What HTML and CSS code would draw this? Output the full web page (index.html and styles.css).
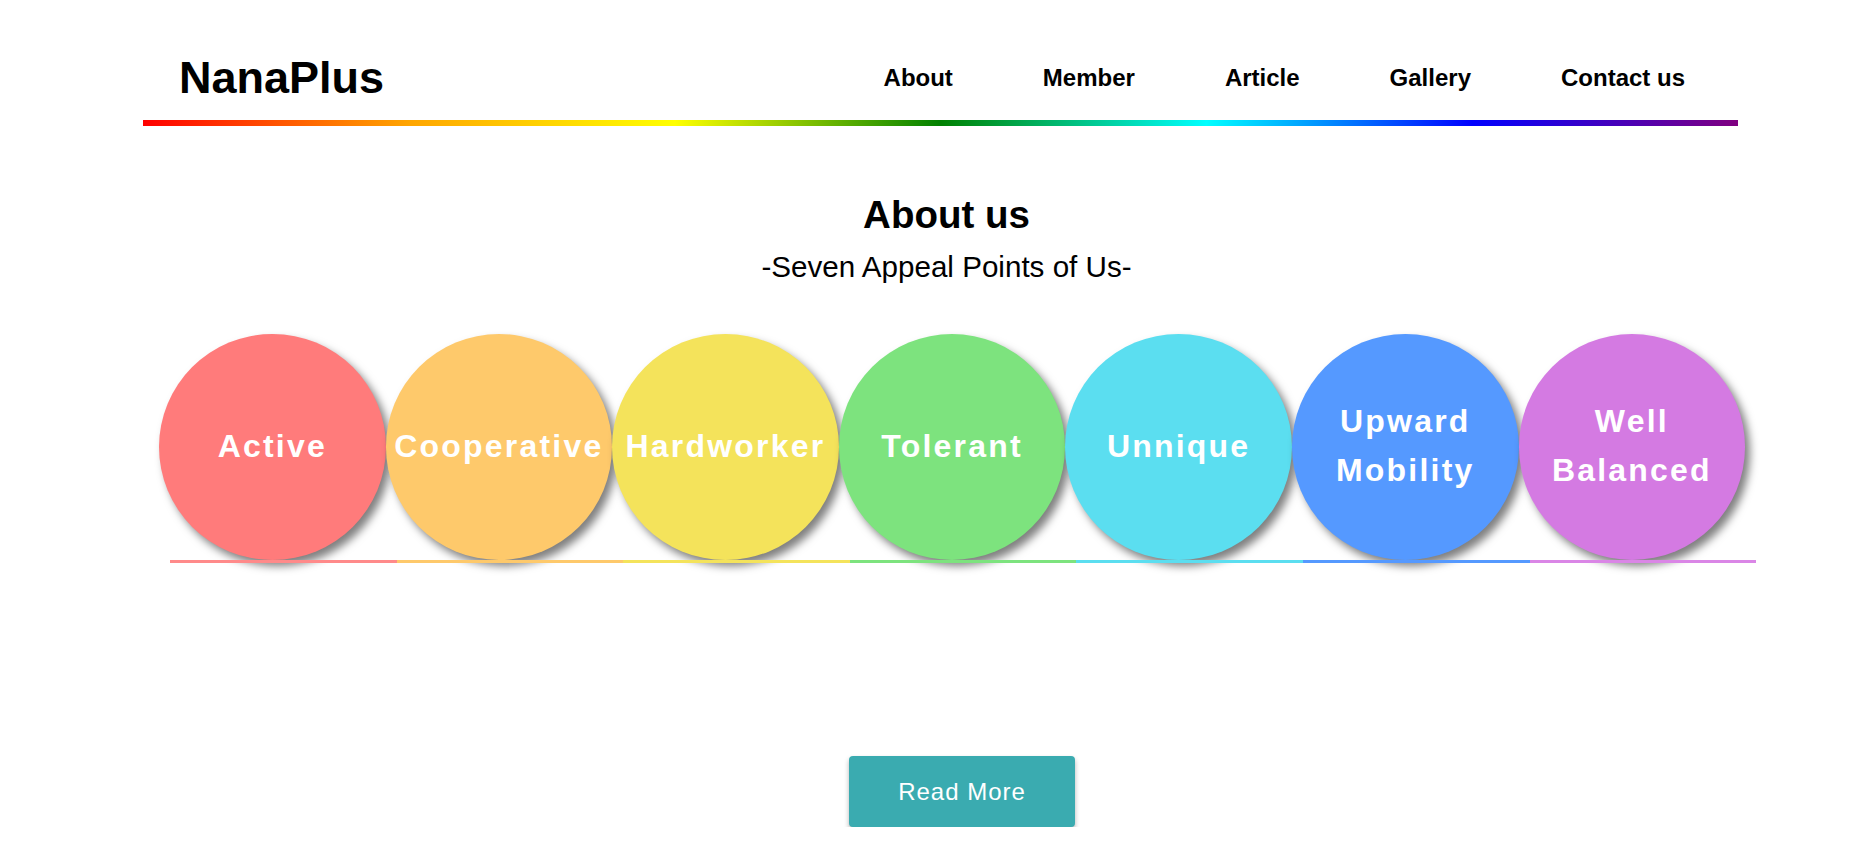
FILE: index.html
```html
<!DOCTYPE html>
<html lang="en">
<head>
<meta charset="utf-8">
<title>NanaPlus</title>
<link rel="stylesheet" href="styles.css">
</head>
<body>
<header class="site-header">
  <div class="header-row">
    <div class="logo">NanaPlus</div>
    <nav class="nav">
      <a class="nav-link" href="#">About</a>
      <a class="nav-link" href="#">Member</a>
      <a class="nav-link" href="#">Article</a>
      <a class="nav-link" href="#">Gallery</a>
      <a class="nav-link" href="#">Contact us</a>
    </nav>
  </div>
  <div class="rainbow-line"></div>
</header>

<main class="about">
  <h1 class="about-title">About us</h1>
  <p class="about-sub">-Seven Appeal Points of Us-</p>

  <div class="circles">
    <div class="circle c-red"><span>Active</span></div>
    <div class="circle c-orange"><span>Cooperative</span></div>
    <div class="circle c-yellow"><span>Hardworker</span></div>
    <div class="circle c-green"><span>Tolerant</span></div>
    <div class="circle c-cyan"><span>Unnique</span></div>
    <div class="circle c-blue"><span>Upward<br>Mobility</span></div>
    <div class="circle c-purple"><span>Well<br>Balanced</span></div>
  </div>
  <div class="lines">
    <div class="seg c-red"></div>
    <div class="seg c-orange"></div>
    <div class="seg c-yellow"></div>
    <div class="seg c-green"></div>
    <div class="seg c-cyan"></div>
    <div class="seg c-blue"></div>
    <div class="seg c-purple"></div>
  </div>

  <div class="btn-row">
    <a class="btn" href="#">Read More</a>
  </div>
</main>
</body>
</html>
```

FILE: styles.css
```css
* { box-sizing: border-box; }

html, body {
  margin: 0;
  padding: 0;
  background: #ffffff;
}

body {
  font-family: "Liberation Sans", Arial, sans-serif;
  color: #000;
}

.site-header {
  margin-left: 143px;
  width: 1595px;
  padding-top: 52px;
}

.header-row {
  display: flex;
  justify-content: space-between;
  align-items: flex-start;
  padding-left: 36px;
  padding-right: 53px;
  padding-bottom: 16px;
}

.logo {
  font-size: 45px;
  font-weight: bold;
  line-height: 52px;
}

.nav {
  display: flex;
  gap: 90px;
}

.nav-link {
  font-size: 24px;
  font-weight: bold;
  line-height: 52px;
  color: #000;
  text-decoration: none;
}

.rainbow-line {
  height: 6px;
  background: linear-gradient(to right, red, orange, yellow, green, cyan, blue, purple);
}

.about {
  margin-left: 143px;
  width: 1607px;
  padding-top: 66px;
}

.about-title {
  margin: 0;
  text-align: center;
  font-size: 38.5px;
  line-height: 46px;
  font-weight: bold;
}

.about-sub {
  margin: 11px 0 0;
  text-align: center;
  font-size: 29.6px;
  line-height: 35px;
}

.circles {
  display: flex;
  margin-top: 50px;
  margin-left: 16px;
}

.circle {
  width: 226.6px;
  height: 226px;
  flex: none;
  border-radius: 50%;
  display: flex;
  align-items: center;
  justify-content: center;
  padding-bottom: 2px;
  text-align: center;
  color: #fff;
  font-size: 32px;
  font-weight: bold;
  line-height: 49px;
  letter-spacing: 2.2px;
  box-shadow: 5px 6px 8px rgba(0, 0, 0, 0.5);
  white-space: nowrap;
}

.lines {
  display: flex;
  margin-left: 27px;
}

.seg {
  width: 226.6px;
  height: 3px;
  flex: none;
}

.c-red { background: #ff7b7b; }
.c-orange { background: #fec96b; }
.c-yellow { background: #f4e35b; }
.c-green { background: #7de37e; }
.c-cyan { background: #5bdef0; }
.c-blue { background: #5599ff; }
.c-purple { background: #d47ae2; }

.seg.c-red { background: #ff8a8a; }
.seg.c-purple { background: #da86e6; }

.btn-row {
  display: flex;
  justify-content: flex-start;
  margin-top: 193px;
  padding-left: 706px;
}

.btn {
  display: flex;
  align-items: center;
  justify-content: center;
  width: 226px;
  height: 71px;
  background: #3aabb0;
  color: #fff;
  font-size: 24px;
  letter-spacing: 1px;
  text-decoration: none;
  border-radius: 4px;
  box-shadow: 0 3px 5px rgba(0, 0, 0, 0.3);
}
```
